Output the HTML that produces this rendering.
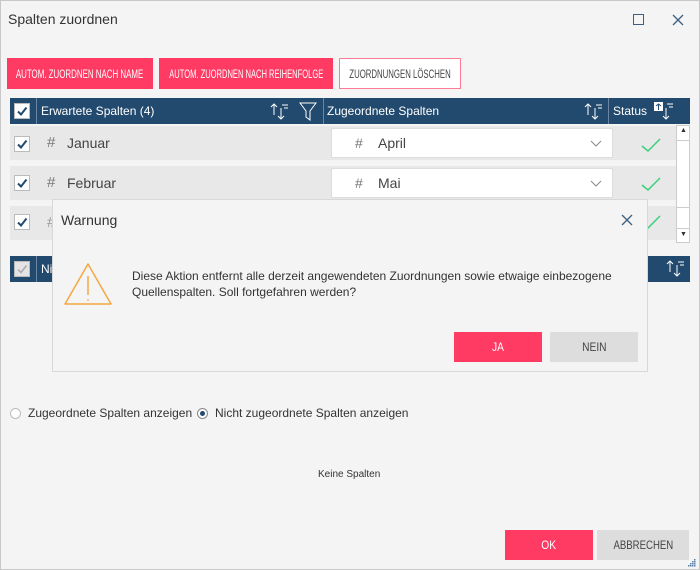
<!DOCTYPE html>
<html><head><meta charset="utf-8"><style>
*{box-sizing:border-box;margin:0;padding:0}
body{width:700px;height:570px;background:#f4f4f4;font-family:"Liberation Sans",sans-serif;position:relative;overflow:hidden;color:#333}
.a{position:absolute}
.border{left:0;top:0;width:700px;height:570px;border:1px solid #c8c8c8}
.btn{position:absolute;display:flex;align-items:center;justify-content:center;font-size:12px;color:#fff;background:#ff3a63;white-space:nowrap;overflow:visible}
.btn span{display:inline-block;transform:scaleX(0.66)}
.hdr{background:#224a6e;color:#fff;font-size:12px}
.cb{position:absolute;width:16px;height:16px;background:#fff;border:1px solid #bbb}
.row{position:absolute;left:10px;width:666px;height:34px;background:#e8e8e8}
.dd{position:absolute;left:331px;width:282px;height:30px;background:#fff;border:1px solid #ddd;font-size:14px}
</style></head><body>
<div class="a border"></div>
<div class="a" style="left:8px;top:11px;font-size:14px;color:#333">Spalten zuordnen</div>
<div class="a" style="left:633px;top:14px;width:11px;height:11px;border:1.5px solid #3d5f80"></div>
<svg class="a" style="left:672px;top:14px" width="12" height="12"><path d="M1 1L11 11M11 1L1 11" stroke="#3d5f80" stroke-width="1.3"/></svg>

<div class="btn" style="left:7px;top:58px;width:146px;height:31px"><span>AUTOM. ZUORDNEN NACH NAME</span></div>
<div class="btn" style="left:159px;top:58px;width:174px;height:31px"><span style="transform:scaleX(0.63)">AUTOM. ZUORDNEN NACH REIHENFOLGE</span></div>
<div class="btn" style="left:339px;top:58px;width:122px;height:31px;background:#fff;color:#444;border:1px solid #ff7a95"><span style="transform:scaleX(0.65)">ZUORDNUNGEN LÖSCHEN</span></div>

<div class="a hdr" style="left:10px;top:98px;width:680px;height:26px"></div>
<div class="a" style="left:36px;top:98px;width:1px;height:26px;background:#6a86a3"></div>
<div class="a" style="left:323px;top:98px;width:1px;height:26px;background:#6a86a3"></div>
<div class="a" style="left:608px;top:98px;width:1px;height:26px;background:#6a86a3"></div>
<div class="cb" style="left:14px;top:103px"><svg width="14" height="14"><path d="M3 7.5L6 10.5L11.5 3.5" stroke="#224a6e" stroke-width="2" fill="none"/></svg></div>
<div class="a" style="left:41px;top:104px;color:#fff;font-size:12px">Erwartete Spalten (4)</div>
<svg class="a" style="left:270px;top:102px" width="20" height="18"><path d="M4 13V2M1 5L4 2L7 5M11 6V17M8 14L11 17L14 14M12 3H18M14 6H18" stroke="#fff" stroke-width="1" fill="none"/></svg>
<svg class="a" style="left:298px;top:101px" width="20" height="20"><path d="M2 2H18L12 10V19L8 16V10Z" stroke="#fff" fill="none" stroke-width="1"/></svg>
<div class="a" style="left:327px;top:104px;color:#fff;font-size:12px">Zugeordnete Spalten</div>
<svg class="a" style="left:584px;top:102px" width="20" height="18"><path d="M4 13V2M1 5L4 2L7 5M11 6V17M8 14L11 17L14 14M12 3H18M14 6H18" stroke="#fff" stroke-width="1" fill="none"/></svg>
<div class="a" style="left:613px;top:104px;color:#fff;font-size:12px">Status</div>
<svg class="a" style="left:653px;top:101px" width="22" height="19"><rect x="1" y="1" width="9" height="9" fill="#fff"/><path d="M5.5 9V3M3 5L5.5 3L8 5" stroke="#224a6e" stroke-width="1" fill="none"/><path d="M13 7V18M10 15L13 18L16 15M14 3H20M16 6H20" stroke="#fff" stroke-width="1" fill="none"/></svg>

<div class="row" style="top:126px"></div>
<div class="row" style="top:166px"></div>
<div class="row" style="top:206px"></div>
<div class="a" style="left:676px;top:125px;width:14px;height:118px;background:#fff;border:1px solid #ccc"></div>
<div class="a" style="left:680px;top:127px;font-size:7px">▲</div>
<div class="a" style="left:680px;top:231px;font-size:7px">▼</div>
<div class="a" style="left:677px;top:140px;width:12px;height:1px;background:#ccc"></div>
<div class="a" style="left:677px;top:207px;width:12px;height:1px;background:#ccc"></div>
<div class="a" style="left:677px;top:228px;width:12px;height:1px;background:#ccc"></div>

<div class="cb" style="left:14px;top:136px"><svg width="14" height="14"><path d="M3 7.5L6 10.5L11.5 3.5" stroke="#224a6e" stroke-width="2" fill="none"/></svg></div>
<div class="cb" style="left:14px;top:175px"><svg width="14" height="14"><path d="M3 7.5L6 10.5L11.5 3.5" stroke="#224a6e" stroke-width="2" fill="none"/></svg></div>
<div class="cb" style="left:14px;top:214px"><svg width="14" height="14"><path d="M3 7.5L6 10.5L11.5 3.5" stroke="#224a6e" stroke-width="2" fill="none"/></svg></div>
<div class="a" style="left:47px;top:134px;font-size:15px;color:#777">#</div>
<div class="a" style="left:67px;top:135px;font-size:14px;color:#444">Januar</div>
<div class="a" style="left:47px;top:174px;font-size:15px;color:#777">#</div>
<div class="a" style="left:67px;top:175px;font-size:14px;color:#444">Februar</div>
<div class="a" style="left:47px;top:214px;font-size:15px;color:#999">#</div>

<div class="dd" style="top:128px"><span class="a" style="left:23px;top:6px;color:#777">#</span><span class="a" style="left:46px;top:6px;color:#444">April</span><svg class="a" style="left:258px;top:11px" width="12" height="8"><path d="M1 1L6 6L11 1" stroke="#888" fill="none"/></svg></div>
<div class="dd" style="top:168px"><span class="a" style="left:23px;top:6px;color:#777">#</span><span class="a" style="left:46px;top:6px;color:#444">Mai</span><svg class="a" style="left:258px;top:11px" width="12" height="8"><path d="M1 1L6 6L11 1" stroke="#888" fill="none"/></svg></div>
<svg class="a" style="left:640px;top:136px" width="22" height="18"><path d="M2 10L8 15L20 3" stroke="#3ad07a" stroke-width="1.5" fill="none"/></svg>
<svg class="a" style="left:640px;top:175px" width="22" height="18"><path d="M2 10L8 15L20 3" stroke="#3ad07a" stroke-width="1.5" fill="none"/></svg>
<svg class="a" style="left:640px;top:213px" width="22" height="18"><path d="M2 10L8 15L20 3" stroke="#3ad07a" stroke-width="1.5" fill="none"/></svg>

<div class="a hdr" style="left:10px;top:256px;width:680px;height:26px"></div>
<div class="cb" style="left:14px;top:261px;background:#e4e4e4"><svg width="14" height="14"><path d="M3 7.5L6 10.5L11.5 3.5" stroke="#aaa" stroke-width="1.5" fill="none"/></svg></div>
<div class="a" style="left:36px;top:256px;width:1px;height:26px;background:#6a86a3"></div>
<div class="a" style="left:41px;top:262px;color:#fff;font-size:12px">Ni</div>
<svg class="a" style="left:666px;top:259px" width="20" height="18"><path d="M4 13V2M1 5L4 2L7 5M11 6V17M8 14L11 17L14 14M12 3H18M14 6H18" stroke="#fff" stroke-width="1" fill="none"/></svg>

<div class="a" style="left:52px;top:199px;width:596px;height:173px;background:#f4f4f4;border:1px solid #d8d8d8"></div>
<div class="a" style="left:61px;top:212px;font-size:14px;color:#333">Warnung</div>
<svg class="a" style="left:621px;top:214px" width="12" height="12"><path d="M1 1L11 11M11 1L1 11" stroke="#3d5f80" stroke-width="1.3"/></svg>
<svg class="a" style="left:63px;top:262px" width="50" height="45"><path d="M25 2L48 42H2Z" stroke="#f5a742" stroke-width="1.5" fill="none" stroke-linejoin="round"/><path d="M25 14V33" stroke="#f5a742" stroke-width="1.5"/><circle cx="25" cy="38" r="0.9" fill="#f5a742"/></svg>
<div class="a" style="left:132px;top:268px;font-size:12px;line-height:16px;color:#333">Diese Aktion entfernt alle derzeit angewendeten Zuordnungen sowie etwaige einbezogene<br>Quellenspalten. Soll fortgefahren werden?</div>
<div class="btn" style="left:454px;top:332px;width:88px;height:30px"><span style="transform:scaleX(0.85)">JA</span></div>
<div class="btn" style="left:550px;top:332px;width:88px;height:30px;background:#dddddd;color:#444"><span style="transform:scaleX(0.85)">NEIN</span></div>

<div class="a" style="left:10px;top:408px;width:11px;height:11px;border-radius:50%;border:1px solid #bbb;background:#fff"></div>
<div class="a" style="left:28px;top:406px;font-size:12px;color:#333">Zugeordnete Spalten anzeigen</div>
<div class="a" style="left:197px;top:408px;width:11px;height:11px;border-radius:50%;border:1px solid #888;background:#fff"></div>
<div class="a" style="left:200px;top:411px;width:5px;height:5px;border-radius:50%;background:#224a6e"></div>
<div class="a" style="left:215px;top:406px;font-size:12px;color:#333">Nicht zugeordnete Spalten anzeigen</div>
<div class="a" style="left:318px;top:469px;font-size:10px;color:#333">Keine Spalten</div>

<div class="btn" style="left:505px;top:530px;width:88px;height:30px"><span style="transform:scaleX(0.85)">OK</span></div>
<div class="btn" style="left:597px;top:530px;width:92px;height:30px;background:#dddddd;color:#444"><span style="transform:scaleX(0.8)">ABBRECHEN</span></div>
<svg class="a" style="left:687px;top:558px" width="10" height="10"><g fill="#5a7fa6"><rect x="7" y="1" width="1.5" height="1.5"/><rect x="5" y="3" width="1.5" height="1.5"/><rect x="7" y="3" width="1.5" height="1.5"/><rect x="3" y="5" width="1.5" height="1.5"/><rect x="5" y="5" width="1.5" height="1.5"/><rect x="7" y="5" width="1.5" height="1.5"/><rect x="1" y="7" width="1.5" height="1.5"/><rect x="3" y="7" width="1.5" height="1.5"/><rect x="5" y="7" width="1.5" height="1.5"/><rect x="7" y="7" width="1.5" height="1.5"/></g></svg>
</body></html>
